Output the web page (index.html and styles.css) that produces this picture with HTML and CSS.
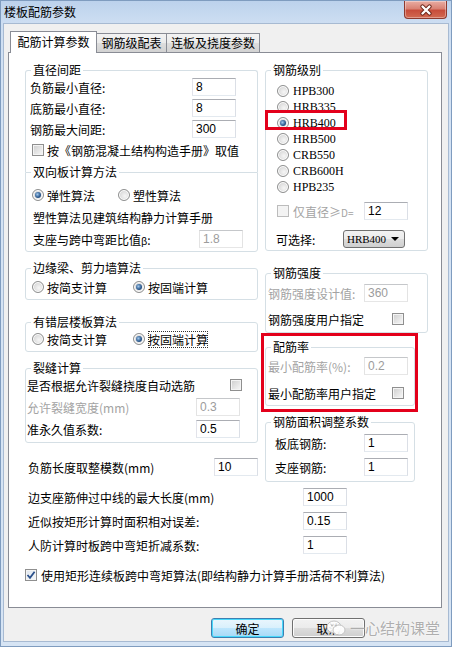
FILE: index.html
```html
<!DOCTYPE html>
<html lang="zh-CN">
<head>
    <meta charset="UTF-8">
    <title>楼板配筋参数</title>
    <link rel="stylesheet" href="styles.css">
</head>
<body>
<div class="window">
    <div class="titlebar">
        <span class="title">楼板配筋参数</span>
        <span class="close-btn">
            <svg width="16" height="12" viewBox="0 0 16 12">
                <path d="M4.5 2.5 L11.5 9.5 M11.5 2.5 L4.5 9.5" stroke="#6b2418" stroke-width="4.2" stroke-linecap="round"/>
                <path d="M4.5 2.5 L11.5 9.5 M11.5 2.5 L4.5 9.5" stroke="#fff" stroke-width="2.4" stroke-linecap="round"/>
            </svg>
        </span>
    </div>

    <div class="client">
        <div class="tabs">
            <div class="tab active">配筋计算参数</div>
            <div class="tab second">钢筋级配表</div>
            <div class="tab third">连板及挠度参数</div>
        </div>

        <div class="panel">
            <div class="cols">
                <!-- left column -->
                <div class="col">
                    <fieldset class="grp g1">
                        <legend>直径间距</legend>
                        <div class="row"><span>负筋最小直径:</span><input class="tb" type="text" value="8"></div>
                        <div class="row"><span>底筋最小直径:</span><input class="tb" type="text" value="8"></div>
                        <div class="row"><span>钢筋最大间距:</span><input class="tb" type="text" value="300"></div>
                        <div class="row"><span class="chk"></span><span>按《钢筋混凝土结构构造手册》取值</span></div>
                    </fieldset>

                    <fieldset class="grp g2">
                        <legend>双向板计算方法</legend>
                        <div class="row opts">
                            <span class="opt"><span class="radio on"></span>弹性算法</span>
                            <span class="opt"><span class="radio"></span>塑性算法</span>
                        </div>
                        <div class="row txt">塑性算法见建筑结构静力计算手册</div>
                        <div class="row txt"><span>支座与跨中弯距比值<small>β</small>:</span><input class="tb" type="text" value="1.8" disabled></div>
                    </fieldset>

                    <fieldset class="grp g3">
                        <legend>边缘梁、剪力墙算法</legend>
                        <div class="row opts">
                            <span class="opt"><span class="radio"></span>按简支计算</span>
                            <span class="opt"><span class="radio on"></span>按固端计算</span>
                        </div>
                    </fieldset>

                    <fieldset class="grp g4">
                        <legend>有错层楼板算法</legend>
                        <div class="row opts">
                            <span class="opt"><span class="radio"></span>按简支计算</span>
                            <span class="opt"><span class="radio on"></span><span class="focus">按固端计算</span></span>
                        </div>
                    </fieldset>

                    <fieldset class="grp g5">
                        <legend>裂缝计算</legend>
                        <div class="row"><span>是否根据允许裂缝挠度自动选筋</span><span class="chk"></span></div>
                        <div class="row off"><span>允许裂缝宽度(mm)</span><input class="tb" type="text" value="0.3" disabled></div>
                        <div class="row"><span>准永久值系数:</span><input class="tb" type="text" value="0.5"></div>
                    </fieldset>

                    <div class="row mod"><span>负筋长度取整模数(mm)</span><input class="tb" type="text" value="10"></div>
                </div>

                <!-- right column -->
                <div class="col">
                    <fieldset class="grp ga">
                        <legend>钢筋级别</legend>
                        <div class="grade"><span class="radio"></span>HPB300</div>
                        <div class="grade"><span class="radio"></span>HRB335</div>
                        <div class="grade picked"><span class="radio on"></span>HRB400<span class="mark"></span></div>
                        <div class="grade"><span class="radio"></span>HRB500</div>
                        <div class="grade"><span class="radio"></span>CRB550</div>
                        <div class="grade"><span class="radio"></span>CRB600H</div>
                        <div class="grade"><span class="radio"></span>HPB235</div>
                        <div class="row only"><span class="chk dis"></span><span class="off-text">仅直径≥<small>D=</small></span><input class="tb" type="text" value="12"></div>
                        <div class="row pick"><span>可选择:</span>
                            <div class="combo"><span>HRB400</span><span class="arrow"></span></div>
                        </div>
                    </fieldset>

                    <fieldset class="grp gb">
                        <legend>钢筋强度</legend>
                        <div class="row off"><span>钢筋强度设计值:</span><input class="tb" type="text" value="360" disabled></div>
                        <div class="row"><span>钢筋强度用户指定</span><span class="chk"></span></div>
                    </fieldset>

                    <div class="hl">
                        <fieldset class="grp gc">
                            <legend>配筋率</legend>
                            <div class="row off"><span>最小配筋率(%):</span><input class="tb" type="text" value="0.2" disabled></div>
                            <div class="row"><span>最小配筋率用户指定</span><span class="chk"></span></div>
                        </fieldset>
                    </div>

                    <fieldset class="grp gd">
                        <legend>钢筋面积调整系数</legend>
                        <div class="row"><span>板底钢筋:</span><input class="tb" type="text" value="1"></div>
                        <div class="row"><span>支座钢筋:</span><input class="tb" type="text" value="1"></div>
                    </fieldset>
                </div>
            </div>

            <div class="bottom">
                <div class="row"><span class="wide">边支座筋伸过中线的最大长度(mm)</span><input class="tb" type="text" value="1000"></div>
                <div class="row"><span class="wide">近似按矩形计算时面积相对误差:</span><input class="tb" type="text" value="0.15"></div>
                <div class="row"><span class="wide">人防计算时板跨中弯矩折减系数:</span><input class="tb" type="text" value="1"></div>
                <div class="row last"><span class="chk on">
                    <svg width="10" height="10" viewBox="0 0 10 10"><path d="M1.5 5 L4 7.8 L8.6 1.8" fill="none" stroke="#2a4f8a" stroke-width="1.8"/></svg>
                </span><span>使用矩形连续板跨中弯矩算法(即结构静力计算手册活荷不利算法)</span></div>
            </div>
        </div>

        <div class="footer">
            <button class="btn default">确定</button>
            <button class="btn">取消</button>
            <div class="wm">
                <svg width="20" height="18" viewBox="0 0 20 18">
                    <ellipse cx="8" cy="8" rx="7" ry="6" fill="rgba(255,255,255,0.85)" stroke="#c4c4c4"/>
                    <ellipse cx="13" cy="11" rx="6" ry="5" fill="rgba(255,255,255,0.9)" stroke="#c4c4c4"/>
                    <circle cx="6" cy="6.5" r="1" fill="#bbb"/>
                    <circle cx="10" cy="6.5" r="1" fill="#bbb"/>
                </svg>
                <span>一心结构课堂</span>
            </div>
        </div>
    </div>
</div>
</body>
</html>
```

FILE: styles.css
```css
* {
    box-sizing: border-box;
}

body {
    margin: 0;
    font: 12px "Noto Sans CJK SC", sans-serif;
    color: #000;
}

.window {
    width: 452px;
    height: 647px;
    border: 1px solid #7f9cbf;
    padding: 0 2px 4px;
    background: linear-gradient(#bcd2ec, #cddef2 22px, #d3e2f4 80px, #d6e4f4);
}

.titlebar {
    height: 22px;
    display: flex;
    justify-content: space-between;
    align-items: center;
}

.title {
    padding-left: 1px;
    line-height: 14px;
}

.close-btn {
    align-self: flex-start;
    width: 43px;
    height: 18px;
    margin-right: 2px;
    display: flex;
    align-items: center;
    justify-content: center;
    border: 1px solid #8d3a2f;
    border-top: none;
    border-radius: 0 0 4px 4px;
    background: linear-gradient(#e9ada3, #d98274 45%, #c74d3b 55%, #d26a52);
    box-shadow: inset 0 0 0 1px rgba(255, 255, 255, 0.35);
}

.client {
    height: 619px;
    background: #f0f0f0;
    border: 1px solid #a7bad2;
    padding: 7px 6px 0 4px;
}

/* tabs */
.tabs {
    display: flex;
    align-items: flex-start;
    height: 22px;
    padding-left: 2px;
    margin-bottom: -1px;
    position: relative;
    z-index: 1;
}

.tab {
    height: 19px;
    margin-top: 2px;
    border: 1px solid #898c95;
    border-bottom: none;
    background: linear-gradient(#f3f3f3, #ebebeb 50%, #dedede 50%, #d2d2d2);
    text-align: center;
    line-height: 18px;
}

.tab.active {
    width: 87px;
    height: 22px;
    margin-top: 0;
    background: #fff;
    line-height: 20px;
}

.tab.second {
    width: 70px;
    border-left: none;
}

.tab.third {
    width: 94px;
    margin-left: -1px;
}

.panel {
    height: 556px;
    background: #fff;
    border: 1px solid #898c95;
    padding: 10px 13px 0 16px;
}

.cols {
    display: grid;
    grid-template-columns: 233px 163px;
    column-gap: 7px;
    align-items: start;
}

/* group boxes */
.grp {
    margin: 0;
    padding: 0 4px;
    border: 1px solid #d5dfe5;
    border-radius: 3px;
    min-width: 0;
}

.grp legend {
    padding: 0 2px;
    margin-left: 1px;
    line-height: 14px;
    background: #fff;
}

.row {
    display: flex;
    align-items: center;
    height: 20px;
    white-space: nowrap;
}

.tb {
    width: 44px;
    height: 18px;
    margin: 0 0 0 auto;
    padding: 0 0 0 3px;
    border: 1px solid;
    border-color: #abadb3 #dbdfe6 #e3e9ef #e2e3ea;
    background: #fff;
    color: #000;
    font: 12px "Liberation Sans", sans-serif;
}

.tb:disabled {
    color: #9c9c9c;
    border-color: #c5c7ca #e3e3e3 #e6e6e6 #e3e3e3;
    background: #fff;
}

.off > span:first-child,
.off-text {
    color: #a3a3a3;
}

small {
    font-size: 10px;
}

.radio {
    width: 12px;
    height: 12px;
    margin-right: 3px;
    flex: none;
    border: 1px solid #8e8f8f;
    border-radius: 50%;
    background: radial-gradient(circle at 60% 60%, #f6f6f6, #d8d8d8 70%, #cfcfcf);
    box-shadow: inset 0 0 0 1px #fff;
    display: flex;
    align-items: center;
    justify-content: center;
}

.radio.on::after {
    content: "";
    width: 6px;
    height: 6px;
    border-radius: 50%;
    background: radial-gradient(circle at 40% 40%, #a4c9ec, #2e5d92 55%, #11325c);
}

.chk {
    width: 12px;
    height: 12px;
    margin-right: 3px;
    flex: none;
    border: 1px solid #8f8f8f;
    background: linear-gradient(135deg, #cdcdcd, #eeeeee 75%, #f7f7f7);
    box-shadow: inset 0 0 0 1px #f4f4f4;
    display: flex;
    align-items: center;
    justify-content: center;
}

.chk.on {
    background: linear-gradient(135deg, #dfe6ee, #f6f8fa);
}

.chk.dis {
    border-color: #bcbcbc;
    background: #f3f3f3;
}

.opt {
    display: flex;
    align-items: center;
}

/* left groups */
.g1 {
    padding-bottom: 12px;
    border-bottom: none;
    border-radius: 3px 3px 0 0;
}

.g1 .row + .row {
    margin-top: 1px;
}

.g1 .tb {
    margin-right: 17px;
}

.g1 .chk {
    margin-left: 2px;
}

.g2 {
    margin-top: -7px;
    padding: 6px 4px 2px;
    border-top-left-radius: 0;
    border-top-right-radius: 0;
}

.g2 .row + .row {
    margin-top: 2px;
}

.g2 .txt {
    padding-left: 3px;
}

.g2 .tb {
    margin-right: 10px;
}

.opts {
    padding-left: 2px;
    gap: 23px;
}

.g3 .opts,
.g4 .opts {
    gap: 26px;
}

.g3 {
    margin-top: 9px;
    padding: 2px 4px 2px;
}

.g4 {
    margin-top: 15px;
    padding: 0 4px 2px;
}

.focus {
    outline: 1px dotted #333;
    outline-offset: -1px;
}

.g5 {
    margin-top: 9px;
    padding: 0 4px 3px;
}

.g5 .row {
    margin-left: -3px;
}

.g5 .row + .row {
    margin-top: 2px;
}

.g5 .tb {
    margin-right: 13px;
}

.g5 .chk {
    margin-left: auto;
    margin-right: 11px;
}

.mod {
    margin-top: 14px;
    padding-left: 3px;
}

/* right groups */
.ga {
    padding: 6px 4px 1px;
}

.grade {
    display: flex;
    align-items: center;
    height: 16px;
    padding-left: 7px;
    font: 12px "Liberation Serif", serif;
    position: relative;
}

.grade .radio {
    margin-right: 4px;
}

.mark {
    position: absolute;
    left: -5px;
    top: -5px;
    width: 82px;
    height: 20px;
    border: 3px solid #e3001b;
}

.only {
    margin-top: 6px;
    padding-left: 7px;
}

.only .chk {
    margin-right: 4px;
}

.ga .tb,
.gb .tb {
    margin-right: 15px;
}

.pick {
    margin-top: 8px;
    padding-left: 6px;
}

.combo {
    width: 62px;
    height: 18px;
    margin: 0 18px 0 auto;
    padding: 0 5px 0 3px;
    display: flex;
    align-items: center;
    justify-content: space-between;
    border: 1px solid #707070;
    border-radius: 3px;
    background: linear-gradient(#f2f2f2, #ebebeb 50%, #dddddd 50%, #cfcfcf);
    font: 11px "Liberation Serif", serif;
}

.arrow {
    width: 0;
    height: 0;
    border-left: 4px solid transparent;
    border-right: 4px solid transparent;
    border-top: 4px solid #000;
}

.gb {
    margin-top: 15px;
    padding: 3px 4px 3px;
}

.gb .row,
.gc .row {
    margin-left: -2px;
}

.gb .row + .row {
    margin-top: 6px;
}

.gb .chk {
    margin-left: auto;
    margin-right: 19px;
}

.hl {
    border: 3px solid #e3001b;
    margin: 0 10px 0 -4px;
}

.gc {
    margin: 4px 0 3px 1px;
    padding: 2px 4px 2px;
}

.gc .row + .row {
    margin-top: 7px;
}

.gc .tb,
.gd .tb {
    margin-right: 2px;
}

.gc .chk {
    margin-left: auto;
    margin-right: 6px;
}

.gd {
    margin: 3px 13px 0 0;
    padding: 4px 4px 4px;
}

.gd .row {
    padding-left: 5px;
}

.gd .row + .row {
    margin-top: 4px;
}

/* bottom rows */
.bottom {
    margin-top: 5px;
}

.bottom .row {
    padding-left: 3px;
}

.bottom .row + .row {
    margin-top: 4px;
}

.bottom .wide {
    width: 275px;
}

.bottom .tb {
    margin-left: 0;
}

.bottom .row.last {
    margin-top: 10px;
    padding-left: 0;
}

.last .chk {
    margin-right: 4px;
}

/* buttons */
.footer {
    display: flex;
    padding: 10px 0 0 203px;
    position: relative;
}

.btn {
    width: 73px;
    height: 20px;
    padding: 0;
    border: 1px solid #707070;
    border-radius: 3px;
    background: linear-gradient(#f2f2f2, #ebebeb 50%, #dddddd 50%, #cfcfcf);
    box-shadow: inset 0 0 0 1px #fcfcfc;
    font: 12px "Noto Sans CJK SC", sans-serif;
    color: #000;
}

.btn + .btn {
    margin-left: 8px;
}

.btn.default {
    border-color: #3c7fb1;
    background: linear-gradient(#eaf6fd, #d9f0fc 50%, #bee6fd 50%, #a7d9f5);
    box-shadow: inset 0 0 0 1px #48d8fb;
}

.wm {
    position: absolute;
    left: 318px;
    top: 9px;
    display: flex;
    align-items: center;
    gap: 4px;
    color: rgba(150, 150, 150, 0.75);
    font-size: 15px;
    text-shadow: 0 0 2px #fff;
}
```
